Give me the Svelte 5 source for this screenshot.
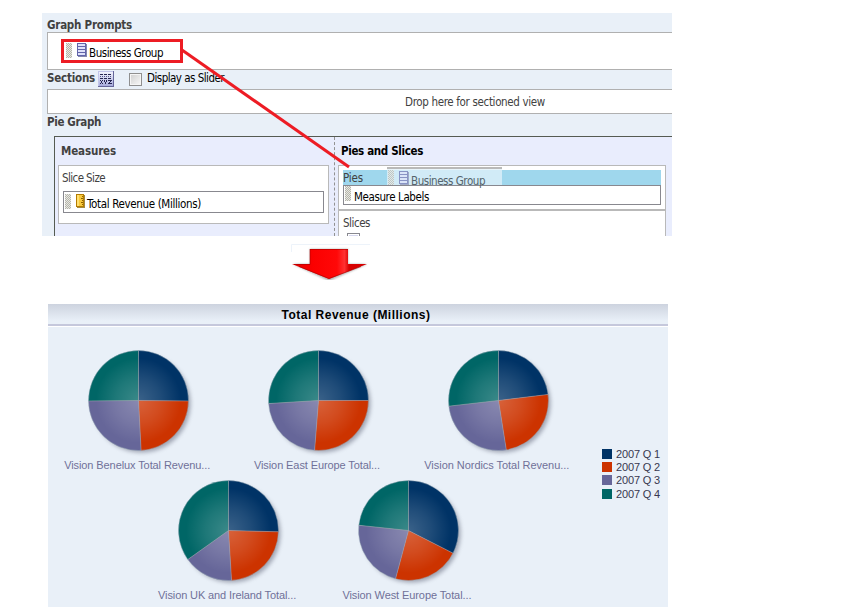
<script>
  const colors = ['#003366', '#cc3300', '#666699', '#006666'];
  const quarters = ['2007 Q 1', '2007 Q 2', '2007 Q 3', '2007 Q 4'];
  // stops: angles in degrees, clockwise from twelve o'clock
  const rows = [
    [
      { name: 'Vision Benelux Total Revenu...', w: 146, stops: [0, 90.5, 177, 269.5, 360] },
      { name: 'Vision East Europe Total...', w: 126, stops: [0, 90, 184.5, 266.5, 360] },
      { name: 'Vision Nordics Total Revenu...', w: 145, stops: [0, 83, 171, 263.5, 360] }
    ],
    [
      { name: 'Vision UK and Ireland Total...', w: 138, stops: [0, 91.5, 176.5, 234.5, 360] },
      { name: 'Vision West Europe Total...', w: 129, stops: [0, 117, 195, 276, 360] }
    ]
  ];
  const point = (deg, r = 50) => {
    const a = (deg * Math.PI) / 180;
    return `${(60 + r * Math.sin(a)).toFixed(2)} ${(60 - r * Math.cos(a)).toFixed(2)}`;
  };
  const wedge = (a, b) => `M60 60L${point(a)}A50 50 0 ${b - a > 180 ? 1 : 0} 1 ${point(b)}Z`;

  // Spreads the letters so that a caption takes exactly the given width
  function fit(node, width) {
    const natural = node.getBoundingClientRect().width;
    node.style.letterSpacing = `${(width - natural) / node.textContent.length}px`;
  }
</script>

{#snippet grip()}
  <svg class="grip" width="6" height="15" shape-rendering="crispEdges">
    <defs>
      <pattern id="dots" width="2" height="2" patternUnits="userSpaceOnUse">
        <path d="M0 0h1v1H0zM1 1h1v1H1z" fill="#b5b5ab" />
      </pattern>
    </defs>
    <rect width="6" height="15" fill="#e9e9e3" /><rect width="6" height="15" fill="url(#dots)" />
  </svg>
{/snippet}

{#snippet column()}
  <svg class="column" width="10" height="14" shape-rendering="crispEdges">
    <path d="M1 1h9v13H1z" fill="#8587ae" />
    <path d="M0 0h9v13H0z" fill="#6265aa" />
    <path d="M1 1h7v2H1zM1 4h7v2H1zM1 7h7v2H1zM1 10h7v2H1z" fill="#dfe1fa" />
  </svg>
{/snippet}

<div class="page">
  <section class="editor">
    <h2 class="prompts-title"><span use:fit={85}>Graph Prompts</span></h2>
    <div class="prompts">
      <div class="picked">
        {@render grip()}{@render column()}<span use:fit={74}>Business Group</span>
      </div>
    </div>
    <div class="sections">
      <b use:fit={48}>Sections</b>
      <svg class="xyz" width="16" height="16" shape-rendering="crispEdges">
        <defs>
          <linearGradient id="button" x1="0" x2="0" y1="0" y2="1">
            <stop offset="0" stop-color="#f2f3fd" /><stop offset="1" stop-color="#a7abdc" />
          </linearGradient>
        </defs>
        <rect width="16" height="16" fill="#66669a" /><rect width="15" height="15" fill="#c2c5ea" />
        <rect x="1" y="1" width="14" height="14" fill="url(#button)" />
        <path d="M2 3.5h12M2 7.5h12" stroke="#25254f" stroke-dasharray="3 1" />
        <path d="M2 5.5h12" stroke="#55558a" stroke-dasharray="1 1" />
        <path d="M2 9h1v1H2zM4 9h1v1H4zM3 10h1v2H3zM2 12h1v1H2zM4 12h1v1H4zM6 9h1v2H6zM8 9h1v2H8zM7 11h1v2H7zM10 9h4v1h-4zM12 10h1v1h-1zM11 11h1v1h-1zM10 12h4v1h-4z" fill="#25254f" />
      </svg>
      <i class="check"></i>
      <span use:fit={77}>Display as Slider</span>
    </div>
    <div class="drop"><span use:fit={140}>Drop here for sectioned view</span></div>
    <h2 class="graph-title"><span use:fit={54}>Pie Graph</span></h2>
    <div class="graph">
      <div class="measures">
        <h3><span use:fit={55}>Measures</span></h3>
        <div class="card">
          <div class="caption"><span use:fit={43}>Slice Size</span></div>
          <div class="item revenue">
            {@render grip()}
            <svg class="ruler" width="9" height="14" shape-rendering="crispEdges">
              <path d="M1 1h8v13H1z" fill="#a58a40" /><path d="M0 0h8v13H0z" fill="#b57c00" />
              <path d="M1 1h6v11H1z" fill="#f8c93c" /><path d="M1 1h2v11H1z" fill="#ffdf70" />
              <path d="M6 2h1v1H6zM5 4h2v1H5zM6 6h1v1H6zM5 8h2v1H5zM6 10h1v1H6z" fill="#8e6000" />
            </svg>
            <span use:fit={114}>Total Revenue (Millions)</span>
          </div>
        </div>
      </div>
      <div class="slices">
        <h3><span use:fit={82}>Pies and Slices</span></h3>
        <div class="card pies">
          <div class="target">
            <span use:fit={20}>Pies</span>
            <div class="ghost">{@render grip()}{@render column()}<span use:fit={74}>Business Group</span></div>
          </div>
          <div class="item labels">{@render grip()}<span use:fit={75}>Measure Labels</span></div>
        </div>
        <div class="card rest">
          <div><span use:fit={27}>Slices</span></div>
          <i class="cut"></i>
        </div>
      </div>
    </div>
    <svg class="drag" width="310" height="160">
      <rect x="20.5" y="27.5" width="119" height="21" fill="none" stroke="#ed1c24" stroke-width="3" />
      <path d="M140 37L307 154" stroke="#ed1c24" stroke-width="3" />
    </svg>
  </section>

  <svg class="arrow" width="80" height="44">
    <defs>
      <linearGradient id="red">
        <stop offset="0" stop-color="#e00000" /><stop offset=".28" stop-color="#fb0000" />
        <stop offset=".6" stop-color="#ff0808" /><stop offset=".7" stop-color="#ff3030" />
        <stop offset=".76" stop-color="#d80000" /><stop offset="1" stop-color="#d40000" />
      </linearGradient>
      <filter id="soft"><feGaussianBlur stdDeviation="1" /></filter>
    </defs>
    <path d="M.5 16V8.5H79" fill="none" stroke="#edf3fa" />
    <path d="M19 13H57V28H76L38 45L2 28H19Z" fill="#777" opacity=".6" filter="url(#soft)" />
    <path d="M19 13H57V28H76L38 43L1 28H19Z" fill="url(#red)" />
    <path d="M19 13.5H57M3 28.5H19V13" fill="none" stroke="#a80000" stroke-opacity=".6" />
    <path d="M8 30.5L38 42.5L70 30.5" fill="none" stroke="#aa0000" stroke-opacity=".6" />
  </svg>

  <section class="chart">
    <header><span use:fit={149}>Total Revenue (Millions)</span></header>
    <svg width="0" height="0" class="defs">
      <defs>
        <radialGradient id="glow" gradientUnits="userSpaceOnUse" cx="60" cy="60" r="50">
          <stop offset="0" stop-color="#fff" stop-opacity=".23" />
          <stop offset=".45" stop-color="#fff" stop-opacity=".12" />
          <stop offset=".85" stop-color="#fff" stop-opacity="0" />
        </radialGradient>
        <filter id="shade" x="-20%" y="-20%" width="140%" height="140%"><feGaussianBlur stdDeviation="2.2" /></filter>
      </defs>
    </svg>
    <div class="body">
      <div class="plots">
        {#each rows as row}
          <div class="row">
            {#each row as pie}
              <figure>
                <svg width="120" height="120" viewBox="-.5 .5 120 120">
                  <circle cx="63" cy="63" r="49" fill="#6e7385" opacity=".6" filter="url(#shade)" />
                  {#each colors as color, i}
                    <path d={wedge(pie.stops[i], pie.stops[i + 1])} fill={color} />
                  {/each}
                  <circle cx="60" cy="60" r="50" fill="url(#glow)" />
                  {#each pie.stops.slice(0, 4) as stop}
                    <path d="M60 60L{point(stop)}" stroke="#a9a7b0" stroke-opacity=".5" />
                  {/each}
                  <circle cx="60" cy="60" r="50" fill="none" stroke="#96a9b6" stroke-opacity=".45" />
                </svg>
                <figcaption><span use:fit={pie.w}>{pie.name}</span></figcaption>
              </figure>
            {/each}
          </div>
        {/each}
      </div>
      <ul>
        {#each quarters as quarter, i}
          <li><i style:background={colors[i]}></i><span use:fit={44}>{quarter}</span></li>
        {/each}
      </ul>
    </div>
  </section>
</div>

<style>
  :global(body) { background: #fff; }
  .page { width: 851px; height: 610px; padding-top: 13px; box-sizing: border-box; overflow: hidden; background: #fff; }
  .page * { box-sizing: border-box; }
  span, b { display: inline-block; white-space: nowrap; flex: none; }
  svg { display: block; flex: none; }
  h2, h3 { margin: 0; font-size: 11.5px; font-weight: bold; color: #414141; }

  .editor { position: relative; width: 630px; height: 223px; margin-left: 42px; overflow: hidden; display: flex; flex-direction: column;
    background: #e9f0f8; color: #000; font: 11.5px/14px "DejaVu Sans Condensed", "DejaVu Sans", sans-serif; font-stretch: condensed; }
  .prompts-title { height: 19px; padding: 5px 0 0 5px; line-height: 14px; }
  .prompts { height: 38px; margin-left: 5px; padding: 10px 0 0 18px; background: #fff; border: 1px solid #b0b0b0; border-right: 0; }
  .picked, .ghost { display: flex; }
  .picked .column { margin-left: 5px; }
  .picked span { margin: 3px 0 0 2px; }
  .sections { height: 19px; display: flex; padding: 1px 0 0 5px; }
  .sections b { color: #414141; }
  .xyz { margin-left: 3px; }
  .check { width: 13px; height: 13px; margin: 2px 5px 0 15px; border: 1px solid #8f8f8f; background: linear-gradient(135deg, #cfcfcf, #f8f8f8); box-shadow: inset 0 0 0 1px #f5f5f5; }
  .drop { height: 25px; margin-left: 5px; padding: 5px 0 0 357px; background: #fff; border: 1px solid #b0b0b0; border-right: 0; color: #414141; }
  .graph-title { height: 22px; padding: 1px 0 0 5px; line-height: 14px; }
  .graph { flex: 1; min-height: 0; margin-left: 12px; display: flex; background: #e9edfd; border: solid #555b52; border-width: 1px 0 0 1px; }
  .measures { width: 280px; padding: 7px 5px 0 3px; border-right: 1px dashed #929292; }
  h3 { height: 21px; padding-left: 3px; line-height: 15px; }
  .card { background: #fff; border: 1px solid #b9b9b9; }
  .measures .card { height: 59px; padding: 5px 4px; }
  .caption { height: 20px; color: #414141; margin-left: -1px; }
  .item { display: flex; border: 1px solid #88888f; }
  .revenue { height: 22px; padding: 2px 0 0 1px; }
  .ruler { margin-left: 5px; }
  .revenue span { margin: 3px 0 0 2px; }
  .slices { flex: 1; padding: 7px 0 0 3px; }
  .slices h3 { color: #000; padding-left: 3px; }
  .slices .card { width: 328px; }
  .pies { height: 45px; padding: 4px 4px 0; }
  .target { position: relative; height: 15px; background: #9fd7ed; color: #414141; line-height: 16px; }
  .ghost { position: absolute; left: 44px; top: -3px; width: 115px; height: 18px; padding: 1px 0 0 1px; border-top: 2px solid #b9b9b9; background: rgba(225, 241, 249, .75); color: #55646c; line-height: 12px; }
  .ghost svg { opacity: .65; }
  .ghost .column { margin: 1px 0 0 5px; }
  .ghost span { margin: 5px 0 0 2px; height: 12px; }
  .labels { height: 20px; padding-left: 1px; }
  .labels span { margin: 4px 0 0 3px; }
  .rest { height: 40px; padding: 5px 4px; color: #414141; }
  .cut { display: block; width: 13px; height: 13px; margin: 3px 0 0 4px; border: 1px solid #88888f; background: #d6d7ef; box-shadow: inset 0 0 0 1px #fff; }
  .drag { position: absolute; left: 0; top: 0; }

  .arrow { margin: 0 0 0 291px; height: 44px; }

  .chart { width: 620px; height: 303px; margin: 24px 0 0 48px; background: #e9f0f8; font-family: "Liberation Sans", Arial, sans-serif; }
  header { height: 23px; padding: 4px 4px 0 0; text-align: center; background: linear-gradient(#cdd3df, #e9f0f8 85%) 0 0 / 100% 20px no-repeat; border-bottom: 1px solid #fff; box-shadow: inset 0 -2px #c5c8dc; font-weight: bold; font-size: 12px; line-height: 15px; }
  .defs { position: absolute; }
  .body { display: flex; justify-content: space-between; padding-top: 14px; }
  .plots { width: 540px; }
  .row { display: flex; justify-content: center; height: 130px; }
  figure { margin: 0; width: 179.8px; display: flex; flex-direction: column; align-items: center; }
  figcaption { margin: -3px 2px 0 0; font-size: 11px; line-height: 14px; color: #707099; }
  ul { list-style: none; margin: 106px 8px 0 0; padding: 0; }
  li { display: flex; align-items: center; height: 13.4px; font-size: 11px; line-height: 13px; color: #383850; }
  li i { width: 10px; height: 10px; margin-right: 4px; }
  li span { padding-top: 1px; }
</style>
